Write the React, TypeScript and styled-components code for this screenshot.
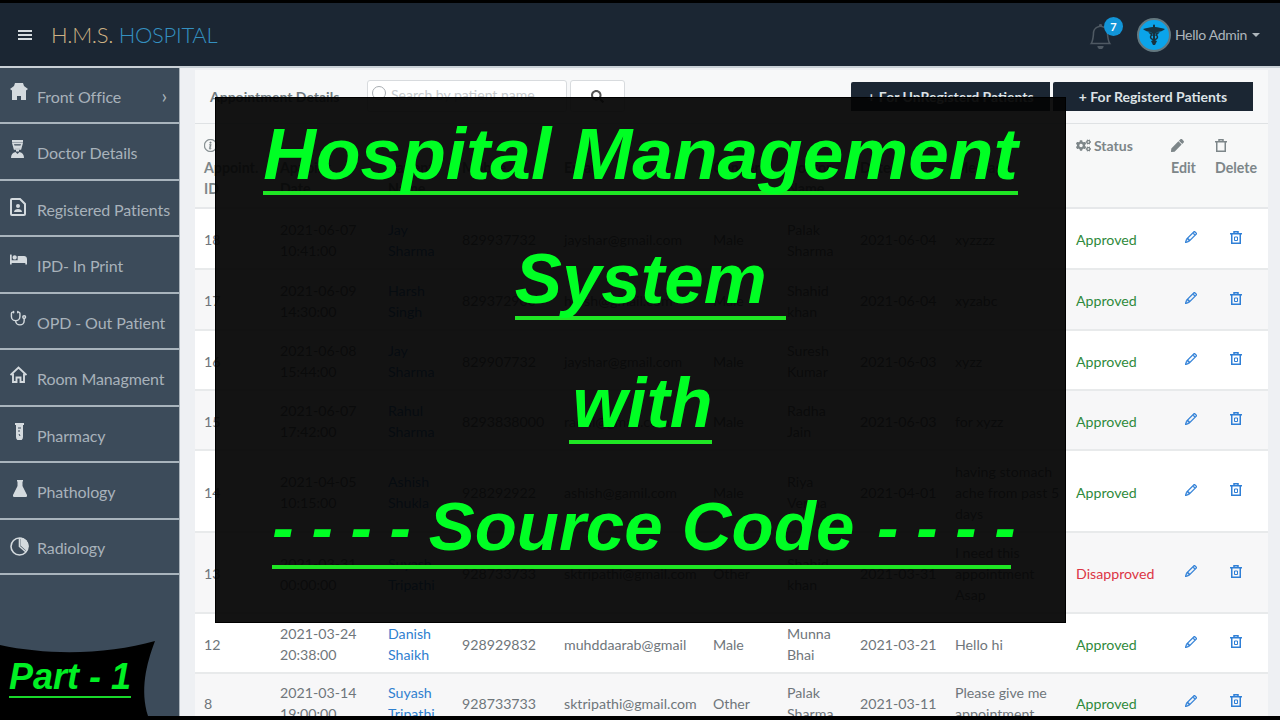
import React from "react";
import styled, { createGlobalStyle } from "styled-components";
import { FaBed, FaCogs, FaPen, FaSearch } from "react-icons/fa";
import { BsBell, BsInfoCircle, BsPencil } from "react-icons/bs";
import { LuStethoscope } from "react-icons/lu";

const Global = createGlobalStyle`
  html, body { margin: 0; padding: 0; background: #000; overflow: hidden; }
  * { box-sizing: border-box; }
`;

const Frame = styled.div`
  position: relative;
  width: 1280px;
  height: 720px;
  padding: 3px 0 4px;
  background: #000;
  font-family: Lato, "Liberation Sans", sans-serif;
  overflow: hidden;
`;
const Screen = styled.div`
  display: flex;
  flex-direction: column;
  height: 713px;
  overflow: hidden;
  background: #eef0f3;
`;
const Header = styled.header`
  flex: none;
  height: 63px;
  display: flex;
  align-items: center;
  padding: 0 20px 0 18px;
  background: #1b2633;
`;
const Burger = styled.span`
  width: 14px;
  height: 10px;
  margin-right: 19px;
  border-top: 2px solid #d5dbdf;
  border-bottom: 2px solid #d5dbdf;
  position: relative;
  &::after {
    content: "";
    position: absolute;
    left: 0;
    right: 0;
    top: 2px;
    height: 2px;
    background: #d5dbdf;
  }
`;
const Brand = styled.div`
  font-size: 22px;
  font-weight: 300;
  letter-spacing: -0.3px;
  color: #cdb183;
  flex: 1;
  span { color: #3490c0; }
`;
const BellWrap = styled.div`
  position: relative;
  width: 26px;
  height: 30px;
  margin-right: 23px;
  margin-top: 8px;
  color: #4f5963;
  font-size: 25px;
`;
const Badge = styled.span`
  position: absolute;
  left: 16px;
  top: -7px;
  width: 19px;
  height: 19px;
  border-radius: 50%;
  background: #1295d8;
  color: #fff;
  font-size: 11px;
  font-weight: 700;
  display: flex;
  align-items: center;
  justify-content: center;
`;
const Avatar = styled.div`
  width: 34px;
  height: 34px;
  border-radius: 50%;
  background: #0ba4ea;
  border: 2px solid #64787f;
  display: flex;
  align-items: center;
  justify-content: center;
  margin-right: 4px;
`;
const Hello = styled.div`
  font-size: 14px;
  color: #aeb6bc;
  letter-spacing: -0.3px;
  &::after {
    content: "";
    display: inline-block;
    margin-left: 5px;
    vertical-align: 3px;
    border-left: 4px solid transparent;
    border-right: 4px solid transparent;
    border-top: 4px solid #aeb6bc;
  }
`;
const Body = styled.div`
  flex: 1;
  min-height: 0;
  display: flex;
  border-top: 2px solid #c9d0d6;
`;
const Side = styled.nav`
  flex: none;
  width: 180px;
  background: #3c4b5a;
  border-right: 1px solid #aab3bb;
`;
const Item = styled.div<{ $h: number }>`
  height: ${(p) => p.$h}px;
  display: flex;
  align-items: center;
  padding: 2px 0 0 10px;
  border-bottom: 2px solid #a9b4bd;
  color: #a8b2ba;
  font-size: 16px;
  font-weight: 400;
  letter-spacing: -0.1px;
  white-space: nowrap;
`;
const ItemIcon = styled.span<{ $dy: number }>`
  width: 27px;
  flex: none;
  display: flex;
  margin-top: ${(p) => p.$dy}px;
  color: #d4dade;
  font-size: 17px;
`;
const ItemArrow = styled.span`
  margin-left: auto;
  font-size: 20px;
  color: #a9b3bb;
  padding-right: 12px;
  margin-top: -2px;
`;
const Main = styled.main`
  flex: 1;
  min-width: 0;
  padding: 2px 12px 0 15px;
`;
const Card = styled.section`
  background: #fff;
`;
const CardHead = styled.div`
  height: 54px;
  display: flex;
  align-items: flex-start;
  padding: 10px 15px 0 15px;
  background: #f7f8f9;
  border-bottom: 1px solid #dfe2e4;
`;
const CardTitle = styled.div`
  font-size: 14px;
  font-weight: 700;
  color: #6f7a80;
  width: 157px;
  padding-top: 8px;
`;
const SearchBox = styled.div`
  width: 200px;
  height: 32px;
  background: #fff;
  border: 1px solid #d8dbde;
  border-radius: 3px;
  padding: 5px 4px;
  display: flex;
  gap: 5px;
  font-size: 14px;
  color: #c5c9cc;
  margin-right: 3px;
`;
const SearchCircle = styled.span`
  width: 14px;
  height: 14px;
  border: 1.5px solid #a8adb1;
  border-radius: 50%;
  flex: none;
`;
const SearchBtn = styled.div`
  width: 55px;
  height: 32px;
  background: #fff;
  border: 1px solid #d8dbde;
  border-radius: 3px;
  display: flex;
  align-items: center;
  justify-content: center;
  color: #555;
  font-size: 13px;
`;
const HeadBtns = styled.div`
  margin-left: auto;
  display: flex;
  gap: 3px;
  margin-top: 2px;
`;
const DarkBtn = styled.div<{ $w: number }>`
  width: ${(p) => p.$w}px;
  height: 29px;
  background: #1b2633;
  border-radius: 2px 0 0 0;
  color: #dde2e6;
  font-size: 14px;
  font-weight: 700;
  display: flex;
  align-items: center;
  justify-content: center;
`;
const Table = styled.table`
  width: 1073px;
  border-collapse: collapse;
  table-layout: fixed;
  font-size: 14.2px;
  color: #6f767b;
  line-height: 21px;
`;
const Th = styled.th`
  padding: 9px 0 0 9px;
  text-align: left;
  vertical-align: top;
  font-weight: 700;
  color: #7d8689;
  height: 84px;
  background: #f7f8f8;
  border-bottom: 2px solid #e6e8ea;
`;
const Tr = styled.tr<{ $h: number; $odd: boolean }>`
  height: ${(p) => p.$h}px;
  background: ${(p) => (p.$odd ? "#f7f7f8" : "#fff")};
  border-bottom: 2px solid #e8eaeb;
`;
const Td = styled.td`
  padding: 2px 4px 0 9px;
  vertical-align: middle;
`;
const NameLink = styled.span`
  color: #2f80cf;
`;
const Status = styled.span<{ $bad?: boolean }>`
  color: ${(p) => (p.$bad ? "#dc3545" : "#2f8a3c")};
`;
const ThIcon = styled.div`
  height: 24px;
  display: flex;
  align-items: center;
  color: #7d8689;
  font-size: 13px;
`;
const InfoGlyph = styled(BsInfoCircle)`
  stroke: currentColor;
  stroke-width: 0.5;
`;
const PencilGlyph = styled(BsPencil)`
  stroke: currentColor;
  stroke-width: 0.8;
`;
const InlineHead = styled.div`
  display: flex;
  align-items: center;
  gap: 3px;
  height: 24px;
  font-size: 14px;
  svg { font-size: 15px; }
`;
const ActionIcon = styled.span<{ $ml: number }>`
  display: flex;
  color: #2f7fd6;
  font-size: 12px;
  margin: -5px 0 0 ${(p) => p.$ml}px;
`;
const Overlay = styled.div`
  position: absolute;
  left: 215px;
  top: 97px;
  width: 851px;
  height: 526px;
  background: rgba(4, 4, 4, 0.94);
  border: 1px solid #000;
  display: flex;
  flex-direction: column;
  align-items: center;
  padding-top: 19px;
  font-family: "Liberation Sans", Arial, sans-serif;
  font-style: italic;
  font-weight: 700;
  color: #00ff24;
  font-size: 70px;
  line-height: 74px;
`;
const Line = styled.div<{ $gap: number; $shift?: number; $size?: number; $pad?: number }>`
  border-bottom: 4px solid #1fe624;
  font-size: ${(p) => p.$size ?? 70}px;
  margin-bottom: ${(p) => p.$gap}px;
  padding-left: ${(p) => p.$pad ?? 0}px;
  transform: translateX(${(p) => p.$shift ?? 0}px);
  white-space: pre;
`;
const Dashes = styled.span`
  font-size: 64px;
`;
const TrailDashes = styled(Dashes)`
  margin-left: 5px;
  margin-right: -5px;
`;
const SourceWords = styled.span`
  font-size: 69px;
`;
const PartWrap = styled.div`
  position: absolute;
  left: 0;
  top: 640px;
  width: 156px;
  height: 76px;
`;
const PartShape = styled.svg`
  position: absolute;
  inset: 0;
`;
const PartText = styled.div`
  position: absolute;
  left: 9px;
  top: 17px;
  font-family: "Liberation Sans", Arial, sans-serif;
  font-style: italic;
  font-weight: 700;
  font-size: 36px;
  line-height: 39px;
  color: #00f024;
  border-bottom: 2px solid #19d82a;
  white-space: nowrap;
`;
const InsetSvg = styled.svg<{ $ml: number }>`
  margin-left: ${(p) => p.$ml}px;
`;

const OfficeIcon = () => (
  <svg width="18" height="17" viewBox="0 0 18 17" fill="currentColor">
    <path d="M5 0h8l1 3 4 3-2 1.500V17h-5v-4H7v4H2V7.500L0 6l4-3z" />
  </svg>
);
const DoctorIcon = () => (
  <svg width="15" height="18" viewBox="0 0 15 18" fill="currentColor">
    <path d="M2 0h11v2.500H2z" />
    <path d="M3 3.500h9L10.500 9h-6z" fill="none" stroke="currentColor" strokeWidth="1.600" />
    <path d="M3.500 5.500h8l-1 3h-6z" />
    <path d="M6 9.500h3v2H6z" />
    <path d="M1 18c0-3 1.500-5.500 4.500-6l2 2 2-2c3 .5 4.500 3 4.500 6z" />
  </svg>
);
const PatientFileIcon = () => (
  <svg width="16" height="18" viewBox="0 0 16 18" fill="none" stroke="currentColor" strokeWidth="2">
    <path d="M2 1h8l5 5v10a1 1 0 0 1-1 1H2a1 1 0 0 1-1-1V2a1 1 0 0 1 1-1z" />
    <circle cx="8" cy="8" r="2" fill="currentColor" stroke="none" />
    <path d="M4 14c0-2 2-3 4-3s4 1 4 3z" fill="currentColor" stroke="none" />
  </svg>
);
const HouseIcon = () => (
  <svg width="17" height="17" viewBox="0 0 17 17" fill="none" stroke="currentColor" strokeWidth="1.900">
    <path d="M0.500 9 8.500 1.500 16.500 9" />
    <path d="M3 7.500V16h3.500v-4.500h4V16H14V7.500" />
  </svg>
);
const TubeIcon = () => (
  <InsetSvg $ml={5} width="9" height="17" viewBox="0 0 9 17" fill="currentColor">
    <path d="M0 0h9v2H8v12a3.500 3.500 0 0 1-7 0V2H0z" />
    <path d="M3 5h3M3 8h2M4 11l1 2" stroke="#3c4b5a" strokeWidth="1" />
  </InsetSvg>
);
const FlaskIcon = () => (
  <InsetSvg $ml={3} width="14" height="17" viewBox="0 0 14 17" fill="currentColor">
    <path d="M4 0h6v1.500H9.500V6L14 15a1.500 1.500 0 0 1-1.500 2h-11A1.500 1.500 0 0 1 0 15L4.500 6V1.500H4z" />
  </InsetSvg>
);
const PieIcon = () => (
  <svg width="19" height="19" viewBox="0 0 19 19" fill="none" stroke="currentColor" strokeWidth="1.600">
    <circle cx="9.500" cy="9.500" r="8.500" />
    <path d="M9.500 1v8.500L16 15" />
    <path d="M10.500 0.500A8.500 8.500 0 0 1 18.500 9.500l-2 4.500-6-5.500z" fill="currentColor" stroke="none" />
  </svg>
);
const TrashIcon = ({ inner }: { inner?: boolean }) => (
  <svg width="12" height="13" viewBox="0 0 12 13" fill="none" stroke="currentColor" strokeWidth="1.500">
    <path d="M0 2.750h12" />
    <path d="M4 2.500V.75h4V2.500" />
    <path d="M1.750 3v9.250h8.500V3" />
    {inner && <path d="M4.500 6v3.500h3V6z" strokeWidth="1" />}
  </svg>
);
const Caduceus = () => (
  <svg width="22" height="24" viewBox="0 0 22 24" fill="#17323f">
    <path d="M0 6c4-1 7-2 10-2V2.500a1 1 0 1 1 2 0V4c3 0 6 1 10 2-2 2-5 3-8 3-1 0-1 1-1 1H9s0-1-1-1C5 9 2 8 0 6z" />
    <rect x="10" y="9" width="2" height="13" />
    <path d="M7 10h8l-2 2c2 1 2 3 0 4l-1 1h-2l-1-1c-2-1-2-3 0-4z" fill="none" stroke="#17323f" strokeWidth="1.500" />
    <path d="M8 18c2-1 4-1 6 0l-2 4h-2z" />
  </svg>
);

const menu: [React.ReactNode, string, number, number][] = [
  [<OfficeIcon />, "Front Office", 56, -9],
  [<DoctorIcon />, "Doctor Details", 57, -7],
  [<PatientFileIcon />, "Registered Patients", 56, -5],
  [<FaBed />, "IPD- In Print", 57, -13],
  [<LuStethoscope />, "OPD - Out Patient", 56, -8],
  [<HouseIcon />, "Room Managment", 57, -8],
  [<TubeIcon />, "Pharmacy", 56, -8],
  [<FlaskIcon />, "Phathology", 57, -7],
  [<PieIcon />, "Radiology", 55, -3],
];

const rows: [string, string, string, string, string, string, string, string, string, string, boolean, number][] = [
  ["18", "2021-06-07 10:41:00", "Jay Sharma", "829937732", "jayshar@gmail.com", "Male", "Palak Sharma", "2021-06-04", "xyzzzz", "Approved", false, 61],
  ["17", "2021-06-09 14:30:00", "Harsh Singh", "829372900", "harsh@gmail.com", "Male", "Shahid khan", "2021-06-04", "xyzabc", "Approved", false, 61],
  ["16", "2021-06-08 15:44:00", "Jay Sharma", "829907732", "jayshar@gmail.com", "Male", "Suresh Kumar", "2021-06-03", "xyzz", "Approved", false, 60],
  ["15", "2021-06-07 17:42:00", "Rahul Sharma", "8293838000", "rahul@gmail.com", "Male", "Radha Jain", "2021-06-03", "for xyzz", "Approved", false, 60],
  ["14", "2021-04-05 10:15:00", "Ashish Shukla", "928292922", "ashish@gamil.com", "Male", "Riya Verma", "2021-04-01", "having stomach ache from past 5 days", "Approved", false, 82],
  ["13", "2021-03-31 00:00:00", "Suyash Tripathi", "928733733", "sktripathi@gmail.com", "Other", "Shahid khan", "2021-03-31", "I need this appointment Asap", "Disapproved", true, 81],
  ["12", "2021-03-24 20:38:00", "Danish Shaikh", "928929832", "muhddaarab@gmail", "Male", "Munna Bhai", "2021-03-21", "Hello hi", "Approved", false, 60],
  ["8", "2021-03-14 19:00:00", "Suyash Tripathi", "928733733", "sktripathi@gmail.com", "Other", "Palak Sharma", "2021-03-11", "Please give me appointment", "Approved", false, 58],
];

const widths = [76, 108, 74, 102, 149, 74, 73, 95, 121, 95, 44, 62];

export default function App() {
  return (
    <Frame>
      <Global />
      <Screen>
        <Header>
          <Burger />
          <Brand>
            H.M.S. <span>HOSPITAL</span>
          </Brand>
          <BellWrap>
            <BsBell />
            <Badge>7</Badge>
          </BellWrap>
          <Avatar>
            <Caduceus />
          </Avatar>
          <Hello>Hello Admin</Hello>
        </Header>
        <Body>
          <Side>
            {menu.map(([icon, label, h, dy], i) => (
              <Item key={label} $h={h}>
                <ItemIcon $dy={dy}>{icon}</ItemIcon>
                {label}
                {i === 0 && <ItemArrow>›</ItemArrow>}
              </Item>
            ))}
          </Side>
          <Main>
            <Card>
              <CardHead>
                <CardTitle>Appointment Details</CardTitle>
                <SearchBox>
                  <SearchCircle />
                  Search by patient name
                </SearchBox>
                <SearchBtn>
                  <FaSearch />
                </SearchBtn>
                <HeadBtns>
                  <DarkBtn $w={199}>+ For UnRegisterd Patients</DarkBtn>
                  <DarkBtn $w={200}>+ For Registerd Patients</DarkBtn>
                </HeadBtns>
              </CardHead>
              <Table>
                <colgroup>
                  {widths.map((w, i) => (
                    <col key={i} width={w} />
                  ))}
                </colgroup>
                <thead>
                  <tr>
                    <Th><ThIcon><InfoGlyph /></ThIcon>Appoint. ID</Th>
                    <Th><ThIcon /><div>Appoint.</div>Date</Th>
                    <Th><ThIcon /><div>Patient</div>Name</Th>
                    <Th><ThIcon /><div>Mobile</div></Th>
                    <Th><ThIcon /><div>Email</div></Th>
                    <Th><ThIcon /><div>Gender</div></Th>
                    <Th><ThIcon /><div>Doctor</div>Name</Th>
                    <Th><ThIcon /><div>Date</div></Th>
                    <Th><ThIcon /><div>Message</div></Th>
                    <Th><InlineHead><FaCogs />Status</InlineHead></Th>
                    <Th><ThIcon><FaPen /></ThIcon>Edit</Th>
                    <Th><ThIcon><TrashIcon /></ThIcon>Delete</Th>
                  </tr>
                </thead>
                <tbody>
                  {rows.map((r, i) => (
                    <Tr key={r[0]} $h={r[11]} $odd={i % 2 === 1}>
                      <Td>{r[0]}</Td>
                      <Td>{r[1]}</Td>
                      <Td><NameLink>{r[2]}</NameLink></Td>
                      <Td>{r[3]}</Td>
                      <Td>{r[4]}</Td>
                      <Td>{r[5]}</Td>
                      <Td>{r[6]}</Td>
                      <Td>{r[7]}</Td>
                      <Td>{r[8]}</Td>
                      <Td><Status $bad={r[10]}>{r[9]}</Status></Td>
                      <Td><ActionIcon $ml={14}><PencilGlyph /></ActionIcon></Td>
                      <Td><ActionIcon $ml={15}><TrashIcon inner /></ActionIcon></Td>
                    </Tr>
                  ))}
                </tbody>
              </Table>
            </Card>
          </Main>
        </Body>
      </Screen>
      <Overlay>
        <Line $gap={47} $size={73}>Hospital Management</Line>
        <Line $gap={46} $shift={10} $size={70.8}>System </Line>
        <Line $gap={45} $pad={4}>with</Line>
        <Line $gap={0} $shift={1}>
          <Dashes>- - - - </Dashes>
          <SourceWords>Source Code</SourceWords>
          <TrailDashes> - - - -</TrailDashes>
        </Line>
      </Overlay>
      <PartWrap>
        <PartShape viewBox="0 0 156 76">
          <path d="M0 5C50 16 110 14 155 1C146 25 140 50 148 76H0Z" fill="#000" />
        </PartShape>
        <PartText>Part - 1</PartText>
      </PartWrap>
    </Frame>
  );
}
